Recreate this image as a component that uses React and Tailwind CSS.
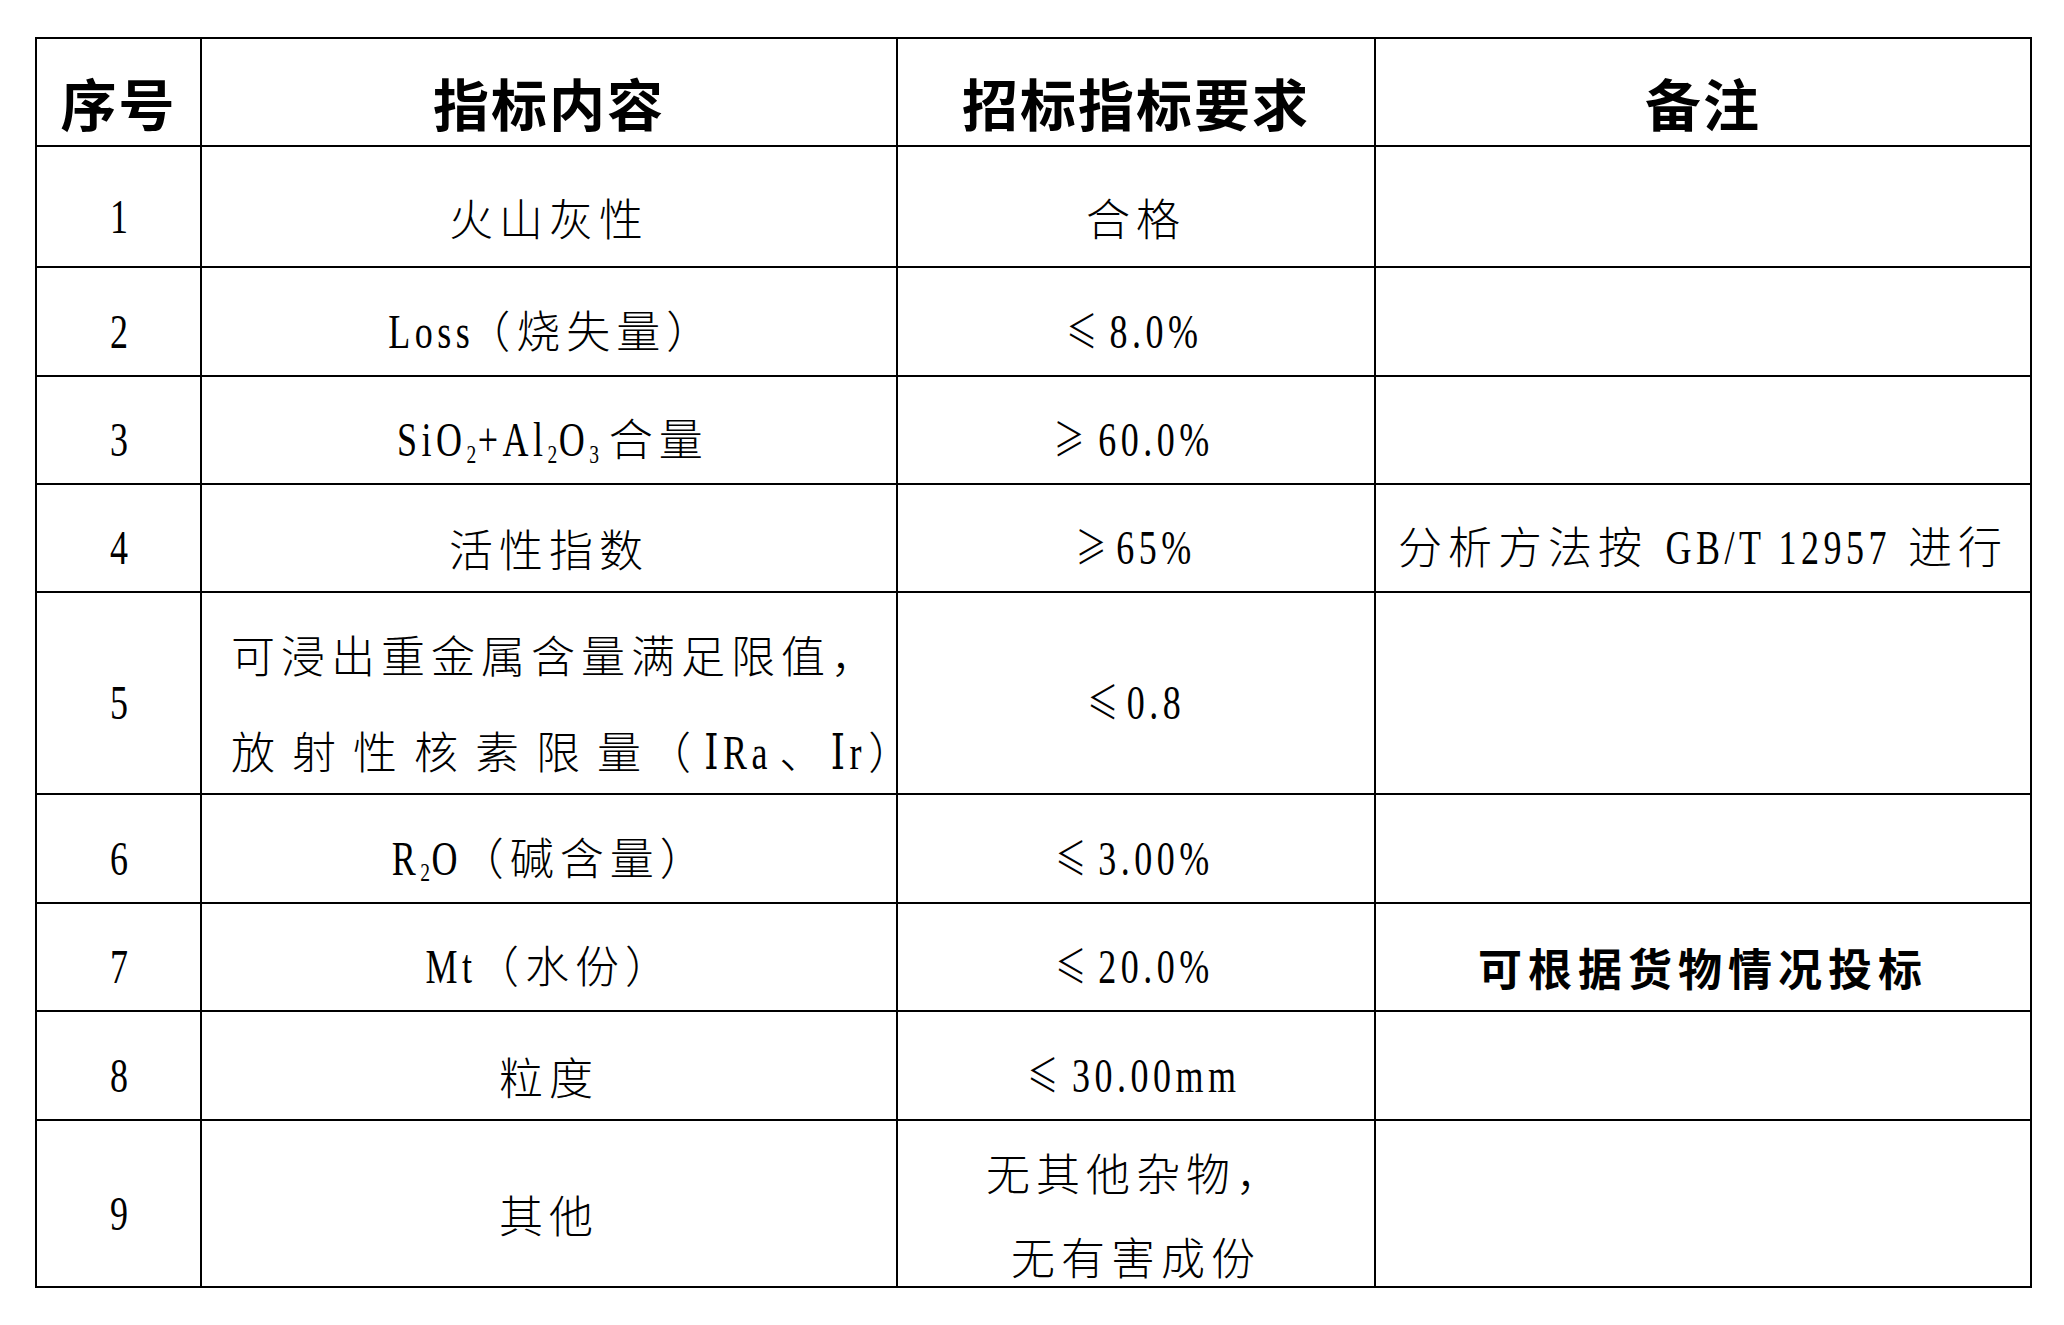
import React from 'react';

// Latin / digits: narrow serif, squeezed horizontally like the document font
function L({ children, className = '' }) {
  return (
    <span className={`inline-block scale-x-75 font-['Liberation_Serif','DejaVu_Serif','Noto_Sans_CJK_SC',serif] text-[48px] tracking-[6px] ${className}`}>
      {children}
    </span>
  );
}

// ≤ / ≥ sign, a bit narrower than the CJK font draws it
function Sign({ children }) {
  return <span className="-mx-[5px] inline-block scale-x-[0.7]">{children}</span>;
}

function Sub({ children }) {
  return <sub className="text-[26px] tracking-[2px]">{children}</sub>;
}

function Cell({ children, className = 'items-center justify-center' }) {
  return (
    <div className={`flex border-r-2 border-b-2 border-black pt-[20px] ${className}`}>
      {children}
    </div>
  );
}

function Head({ children }) {
  return (
    <Cell>
      <div className="text-[56px] font-bold tracking-[2px] whitespace-nowrap">{children}</div>
    </Cell>
  );
}

function Text({ children }) {
  return (
    <Cell>
      <div className="whitespace-nowrap">{children}</div>
    </Cell>
  );
}

function Num({ children }) {
  return (
    <Cell>
      <span className="inline-block scale-x-75 font-['Liberation_Serif',serif] text-[48px] tracking-normal">{children}</span>
    </Cell>
  );
}

const App = () => {
  return (
    <div className="min-h-screen bg-white pl-[35px] pt-[37px] text-black">
      <div className="grid w-[1997px] grid-cols-[165px_696px_478px_656px] grid-rows-[108px_121px_109px_108px_108px_202px_109px_108px_109px_167px] border-l-2 border-t-2 border-black font-['Noto_Sans_CJK_SC',sans-serif] text-[44px] font-light tracking-[6px]">
        {/* header */}
        <Head>序号</Head>
        <Head>指标内容</Head>
        <Head>招标指标要求</Head>
        <Head>备注</Head>

        {/* 1 */}
        <Num>1</Num>
        <Text>火山灰性</Text>
        <Text>合格</Text>
        <Cell />

        {/* 2 */}
        <Num>2</Num>
        <Text><L className="-ml-[8px] -mr-[22px]">Loss</L>（烧失量）</Text>
        <Text><Sign>≤</Sign><L className="-mx-[10px]">8.0%</L></Text>
        <Cell />

        {/* 3 */}
        <Num>3</Num>
        <Text>
          <L className="-mx-[26px]">SiO<Sub>2</Sub>+Al<Sub>2</Sub>O<Sub>3</Sub></L>合量
        </Text>
        <Text><Sign>≥</Sign><L className="-mx-[12px]">60.0%</L></Text>
        <Cell />

        {/* 4 */}
        <Num>4</Num>
        <Text>活性指数</Text>
        <Text><Sign>≥</Sign><L className="-mx-[10px]">65%</L></Text>
        <Text>分析方法按 <L className="-mx-[36px]">GB/T 12957</L> 进行</Text>

        {/* 5 */}
        <Num>5</Num>
        <Cell className="flex-col items-start justify-center whitespace-nowrap pl-[29px] leading-[96px]">
          <div>可浸出重金属含量满足限值，</div>
          <div>
            <span className="tracking-[17px]">放射性核素限</span>量（<L className="-mx-[4px]">ⅠRa</L>、<L className="-mx-[4px]">Ⅰr</L>）
          </div>
        </Cell>
        <Text><Sign>≤</Sign><L className="-mx-[8px]">0.8</L></Text>
        <Cell />

        {/* 6 */}
        <Num>6</Num>
        <Text><L className="-ml-[8px] -mr-[14px]">R<Sub>2</Sub>O</L>（碱含量）</Text>
        <Text><Sign>≤</Sign><L className="-mx-[14px]">3.00%</L></Text>
        <Cell />

        {/* 7 */}
        <Num>7</Num>
        <Text><L className="-ml-[6px] -mr-[10px]">Mt</L>（水份）</Text>
        <Text><Sign>≤</Sign><L className="-mx-[14px]">20.0%</L></Text>
        <Text><span className="font-bold">可根据货物情况投标</span></Text>

        {/* 8 */}
        <Num>8</Num>
        <Text>粒度</Text>
        <Text><Sign>≤</Sign><L className="-mx-[21px]">30.00mm</L></Text>
        <Cell />

        {/* 9 */}
        <Num>9</Num>
        <Text>其他</Text>
        <Cell className="flex-col items-center justify-center whitespace-nowrap leading-[84px]">
          <div>无其他杂物，</div>
          <div>无有害成份</div>
        </Cell>
        <Cell />
      </div>
    </div>
  );
};

export default App;
